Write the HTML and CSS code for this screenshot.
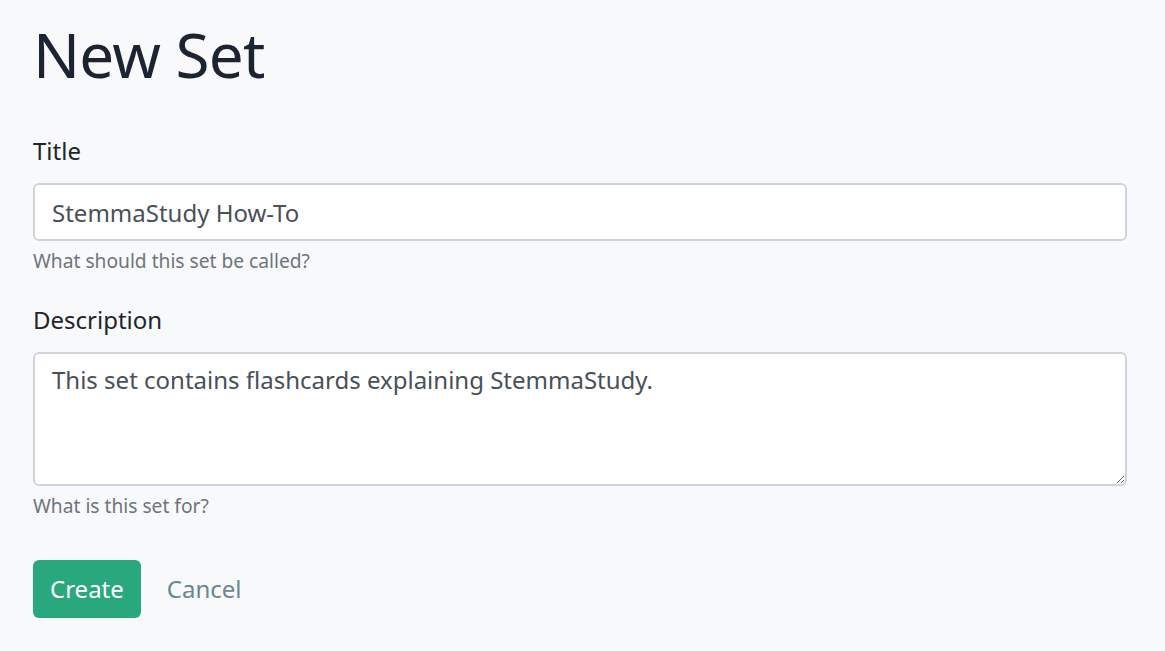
FILE: index.html
```html
<!DOCTYPE html>
<html lang="en">
<head>
<meta charset="utf-8">
<title>New Set</title>
<link rel="stylesheet" href="styles.css">
</head>
<body>
<main class="page">
  <h1 class="page-title">New Set</h1>
  <form class="set-form">
    <div class="field">
      <label class="field-label" for="title">Title</label>
      <input class="field-input" id="title" type="text" value="StemmaStudy How-To">
      <small class="field-help">What should this set be called?</small>
    </div>
    <div class="field">
      <label class="field-label" for="desc">Description</label>
      <textarea class="field-input field-textarea" id="desc">This set contains flashcards explaining StemmaStudy.</textarea>
      <small class="field-help">What is this set for?</small>
    </div>
    <div class="actions">
      <button class="btn-create" type="button">Create</button>
      <a class="btn-cancel" href="#">Cancel</a>
    </div>
  </form>
</main>
</body>
</html>
```
FILE: styles.css
```css
html, body {
  margin: 0;
  padding: 0;
  background: #f8f9fa;
}
body {
  font-family: "Noto Sans", "Open Sans", sans-serif;
  color: #212529;
}
.page {
  padding: 17px 38px 0 33px;
}
.page-title {
  margin: 0 0 42px 0;
  font-size: 62px;
  letter-spacing: -0.8px;
  font-weight: 400;
  line-height: 1.2;
  color: #1c2433;
}
.field {
  display: flex;
  flex-direction: column;
  margin-bottom: 26px;
}
.field-label {
  font-size: 24px;
  line-height: 36px;
  margin-bottom: 14px;
  color: #212529;
}
.field-input {
  box-sizing: border-box;
  height: 58px;
  width: 100%;
  border: 2px solid #ced4da;
  border-radius: 6px;
  background: #fff;
  padding: 0 17px;
  font-family: inherit;
  font-size: 24px;
  color: #495057;
  outline: none;
}
.field-textarea {
  height: 134px;
  padding-top: 8px;
  resize: vertical;
  line-height: 1.5;
}
.field-help {
  margin-top: 6px;
  font-size: 19.2px;
  line-height: 28.8px;
  color: #6c757d;
}
.actions {
  display: flex;
  align-items: center;
  gap: 26px;
  margin-top: 39px;
}
.btn-create {
  height: 58px;
  padding: 0 17px;
  border: none;
  border-radius: 6px;
  background: #29a87d;
  color: #fff;
  font-family: inherit;
  font-size: 24px;
}
.btn-cancel {
  font-size: 24px;
  color: #6a8792;
  text-decoration: none;
}
```
